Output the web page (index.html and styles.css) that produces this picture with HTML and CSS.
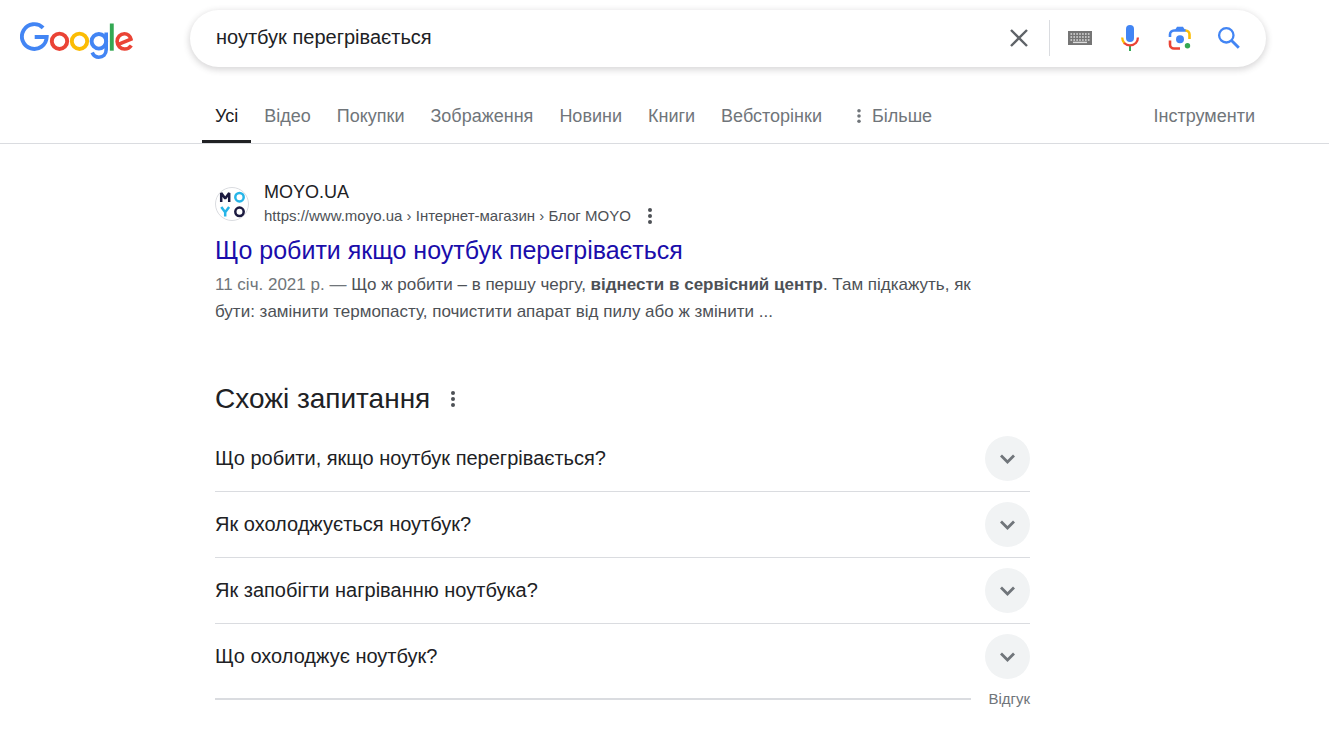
FILE: index.html
```html
<!DOCTYPE html>
<html lang="uk">
<head>
<meta charset="utf-8">
<meta name="viewport" content="width=device-width, initial-scale=1">
<title>ноутбук перегрівається</title>
<link rel="stylesheet" href="styles.css">
</head>
<body>
<svg class="sprite" aria-hidden="true">
  <symbol id="dots" viewBox="0 0 6 18"><circle cx="3" cy="3" r="2"/><circle cx="3" cy="9" r="2"/><circle cx="3" cy="15" r="2"/></symbol>
  <symbol id="chevron" viewBox="0 0 24 24"><path d="M5 8.500 11.500 15l6.500-6.500" fill="none" stroke="currentColor" stroke-width="2.800"/></symbol>
</svg>
<header class="header">
  <a class="logo" href="#" aria-label="Google">
    <svg class="logo-mark" viewBox="20 20 114 40" fill="none" stroke-width="3.900">
      <path d="M43.100 27.800A12.400 12.400 0 1 0 46.700 37H34.700" stroke="#4285f4"/>
      <circle cx="59.500" cy="41.300" r="7.700" stroke="#ea4335"/>
      <circle cx="79.500" cy="41.300" r="7.700" stroke="#fbbc05"/>
      <circle cx="98.900" cy="41.300" r="7.300" stroke="#4285f4"/>
      <path d="M106.200 32.500V49.500C106.200 54.500 103 57.200 98.800 57.200C95.400 57.200 93.200 55 92.200 52.500" stroke="#4285f4" stroke-width="3.600"/>
      <path d="M111.800 23.500V50.700" stroke="#34a853"/>
      <path d="M117.700 44.700L130.900 39.100C130 36 127.500 33.700 124.400 33.700A7.400 7.600 0 0 0 124.700 49C127.600 49 129.800 47.700 131.300 45.500" stroke="#ea4335" stroke-width="3.600"/>
    </svg>
  </a>
  <form class="search" role="search">
    <input class="search-input" type="text" aria-label="Пошук" value="ноутбук перегрівається">
    <button class="icon-button clear" type="button" aria-label="Очистити">
      <svg class="icon" viewBox="0 0 24 24"><path d="M4 4 20 20M20 4 4 20" fill="none" stroke="#5f6368" stroke-width="2.400"/></svg>
    </button>
    <button class="icon-button keyboard" type="button" aria-label="Клавіатура">
      <svg class="icon" viewBox="0 0 24 24"><path fill="#757575" d="M0 5h24v14H0z"/><path d="M2.500 8h19M2.500 11h19M2.500 14h19" stroke="#ddd" stroke-width="1.600" stroke-dasharray="1.600 1.300"/><path d="M5 16.400h14" stroke="#ddd" stroke-width="1.400"/></svg>
    </button>
    <button class="icon-button" type="button" aria-label="Голосовий пошук">
      <svg class="icon mic" viewBox="0 0 24 26"><rect x="8" y="0" width="8" height="17" rx="4" fill="#4285f4"/><path d="M11 20h2v6h-2z" fill="#34a853"/><path d="M4.200 12.500c0 3 1 4.700 2.500 6.100" fill="none" stroke="#fbbc05" stroke-width="2.300"/><path d="M6.100 18c3.300 3.200 8.500 3.200 11.800 0 1.300-1.300 2-3.200 2-5.500" fill="none" stroke="#ea4335" stroke-width="2.300"/></svg>
    </button>
    <button class="icon-button" type="button" aria-label="Пошук за зображенням">
      <svg class="icon" viewBox="0 0 24 24"><g fill="none" stroke-width="2.600"><path d="M2 11V8.500a4 4 0 0 1 4-4h12" stroke="#4285f4"/><path d="M17.500 4.500a4 4 0 0 1 4 4V13" stroke="#fbbc05"/><path d="M2 14.500v4a4 4 0 0 0 4 4h6" stroke="#ea4335"/></g><path d="M7 4 9 .800h6L17 4z" fill="#4285f4"/><circle cx="12" cy="13.200" r="4" fill="#4285f4"/><circle cx="19.500" cy="19.700" r="2.700" fill="#34a853"/></svg>
    </button>
    <button class="icon-button" type="submit" aria-label="Шукати">
      <svg class="icon" viewBox="0 0 24 24"><circle cx="9.300" cy="9.300" r="7.200" fill="none" stroke="#4285f4" stroke-width="2.300"/><path d="m14.500 14.500 7.300 7.300" stroke="#4285f4" stroke-width="2.900"/></svg>
    </button>
  </form>
</header>
<nav class="tabs" aria-label="Типи результатів">
  <div class="tabs-inner">
    <a class="tab active" href="#" aria-current="page">Усі</a>
    <a class="tab" href="#">Відео</a>
    <a class="tab" href="#">Покупки</a>
    <a class="tab" href="#">Зображення</a>
    <a class="tab" href="#">Новини</a>
    <a class="tab" href="#">Книги</a>
    <a class="tab" href="#">Вебсторінки</a>
    <button class="tab more" type="button"><svg class="dots" aria-hidden="true"><use href="#dots"/></svg>Більше</button>
    <button class="tab tools" type="button">Інструменти</button>
  </div>
</nav>
<main class="results">
  <article class="result">
    <div class="source">
      <svg class="favicon" viewBox="0 0 34 34" aria-hidden="true"><circle cx="17" cy="17" r="16.500" fill="#fff" stroke="#dadce0"/><g fill="none" stroke-width="2.500" stroke-linejoin="bevel"><path d="M6.200 15V6L10.200 11.500 14.200 6V15" stroke="#1b1a40"/><circle cx="24.500" cy="10.200" r="4.200" stroke="#27b5e8"/><path d="M6.300 20 10.200 25.200 14.100 20M10.200 24.500V29.500" stroke="#27b5e8"/><circle cx="24.500" cy="24.800" r="4.200" stroke="#1b1a40"/></g></svg>
      <div class="source-text">
        <div class="site">MOYO.UA</div>
        <div class="url"><cite>https://www.moyo.ua › Інтернет-магазин › Блог MOYO</cite><button class="menu" type="button" aria-label="Про цей результат"><svg class="dots" aria-hidden="true"><use href="#dots"/></svg></button></div>
      </div>
    </div>
    <h3 class="title"><a href="#">Що робити якщо ноутбук перегрівається</a></h3>
    <p class="snippet"><span class="date">11 січ. 2021 р. — </span>Що ж робити – в першу чергу, <b>віднести в сервісний центр</b>. Там підкажуть, як бути: замінити термопасту, почистити апарат від пилу або ж змінити ...</p>
  </article>
  <section class="related">
    <div class="related-head"><h2>Схожі запитання</h2><button class="menu" type="button" aria-label="Про ці запитання"><svg class="dots" aria-hidden="true"><use href="#dots"/></svg></button></div>
    <div class="questions">
      <button class="question" type="button"><span>Що робити, якщо ноутбук перегрівається?</span><span class="expand"><svg class="chevron" aria-hidden="true"><use href="#chevron"/></svg></span></button>
      <button class="question" type="button"><span>Як охолоджується ноутбук?</span><span class="expand"><svg class="chevron" aria-hidden="true"><use href="#chevron"/></svg></span></button>
      <button class="question" type="button"><span>Як запобігти нагріванню ноутбука?</span><span class="expand"><svg class="chevron" aria-hidden="true"><use href="#chevron"/></svg></span></button>
      <button class="question" type="button"><span>Що охолоджує ноутбук?</span><span class="expand"><svg class="chevron" aria-hidden="true"><use href="#chevron"/></svg></span></button>
    </div>
    <div class="feedback"><a href="#">Відгук</a></div>
  </section>
</main>
</body>
</html>
```
FILE: styles.css
```css
* { box-sizing: border-box; }
body { margin: 0; background: #fff; color: #202124; font-family: "Liberation Sans", Arial, sans-serif; }
a { text-decoration: none; }
button { border: 0; padding: 0; background: none; font: inherit; color: inherit; cursor: pointer; }
svg { display: block; }
.sprite { position: absolute; width: 0; height: 0; }

.header { display: flex; align-items: center; padding: 10px 24px 0 20px; }
.logo { flex: none; width: 170px; padding-top: 3px; }
.logo-mark { width: 114px; height: 40px; }
.search { display: flex; align-items: center; flex: 1; min-width: 0; max-width: 1076px; height: 57px; padding: 0 25px 2px 26px; border-radius: 29px; box-shadow: 0 2px 6px 1px rgba(64, 60, 67, .2); }
.search-input { flex: 1; min-width: 0; height: 36px; border: 0; padding: 0; outline: 0; background: none; color: #202124; font: 20px "Liberation Sans", Arial, sans-serif; }
.icon-button { flex: none; display: flex; align-items: center; justify-content: center; width: 50px; height: 36px; }
.icon-button:last-child { width: 25px; margin-left: 11px; }
.icon { width: 24px; height: 24px; }
.mic { height: 26px; }
.clear { width: 44px; margin-right: 8px; }
.keyboard { width: 56px; padding-left: 4px; border-left: 1px solid #dadce0; }

.tabs { margin-top: 22px; border-bottom: 1px solid #dadce0; }
.tabs-inner { display: flex; max-width: 1268px; padding-left: 202px; }
.tab { height: 54px; padding: 0 13px; font-size: 18px; line-height: 54px; color: #70757a; white-space: nowrap; }
.active { color: #202124; border-bottom: 3px solid #202124; }
.more { display: flex; align-items: center; gap: 10px; margin-left: 8px; }
.tools { margin-left: auto; }
.dots { width: 6px; height: 18px; fill: currentColor; }
.more .dots { height: 16px; }

.results { max-width: 1030px; padding: 36px 0 24px 215px; }
.source { display: flex; align-items: center; gap: 15px; }
.favicon { flex: none; width: 34px; height: 34px; }
.site { font-size: 18px; line-height: 24px; }
.url { display: flex; align-items: center; font-size: 15px; line-height: 24px; color: #4d5156; }
.url cite { font-style: normal; }
.menu { display: flex; margin-left: 16px; color: #4d5156; }
.title { margin: 6px 0 0; font-size: 25px; font-weight: 400; line-height: 32px; }
.title a { color: #1a0dab; }
.snippet { max-width: 790px; margin: 5px 0 0; font-size: 17px; line-height: 27px; color: #4d5156; }
.date { color: #70757a; }

.related { margin-top: 54px; }
.related-head { display: flex; align-items: center; margin-bottom: 7px; }
.related-head h2 { margin: 0; font-size: 28px; font-weight: 400; line-height: 40px; }
.related-head .menu { margin-left: 20px; }
.question { display: flex; align-items: center; justify-content: space-between; width: 100%; height: 66px; font-size: 20px; text-align: left; border-bottom: 1px solid #dadce0; }
.question:last-child { height: 65px; border-bottom: 0; }
.expand { display: flex; align-items: center; justify-content: center; width: 45px; height: 45px; border-radius: 50%; background: #f1f3f4; color: #70757a; }
.chevron { width: 24px; height: 24px; }
.feedback { display: flex; align-items: center; gap: 17px; }
.feedback::before { content: ""; flex: 1; height: 2px; background: #dadce0; }
.feedback a { font-size: 15px; line-height: 20px; color: #70757a; }
```
